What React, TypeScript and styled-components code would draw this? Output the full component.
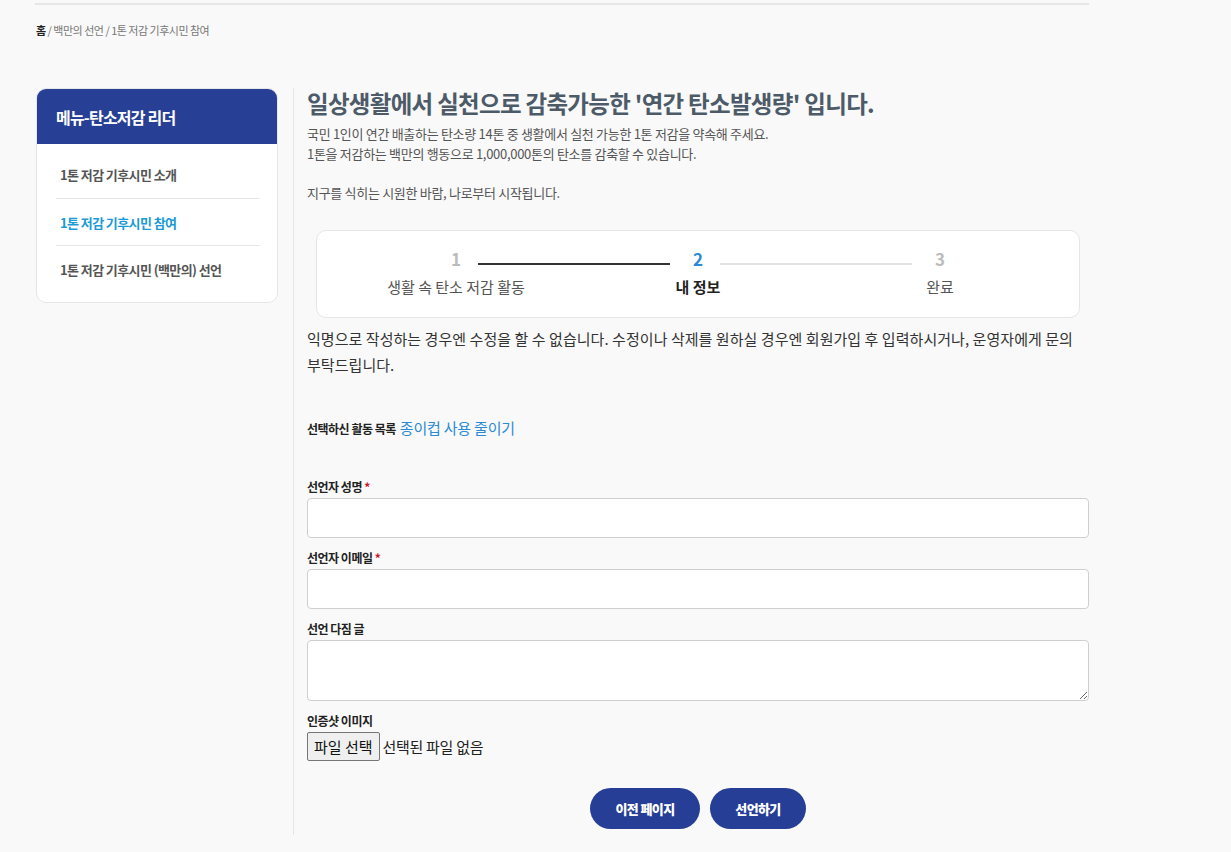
import React from "react"
import styled, { createGlobalStyle } from "styled-components"

const GlobalStyle = createGlobalStyle`
  body {
    margin: 0;
    background: #f9f9f9;
    font-family: "Noto Sans CJK KR", "Noto Sans", sans-serif;
    color: #333;
  }
  *, *::before, *::after {
    box-sizing: border-box;
  }
`

const Page = styled.div`
  width: 1054px;
  margin-left: 35px;
  padding-top: 3px;
`

const TopRule = styled.div`
  border-top: 2px solid #e6e6e6;
`

const Breadcrumb = styled.div`
  margin-top: 16px;
  font-size: 11px;
  line-height: 18px;
  color: #777;
  padding-left: 1px;
  letter-spacing: -0.5px;

  b {
    color: #222;
    font-weight: 700;
  }
`

const Layout = styled.div`
  display: flex;
  margin-top: 49px;
`

const Sidebar = styled.aside`
  width: 242px;
  margin-left: 1px;
  margin-right: 15px;
  align-self: flex-start;
  background: #fff;
  border: 1px solid #e6e6e6;
  border-radius: 10px;
  overflow: hidden;
`

const SideHeader = styled.div`
  height: 55px;
  background: #283f96;
  color: #fff;
  font-size: 16px;
  font-weight: 700;
  letter-spacing: -0.8px;
  display: flex;
  align-items: center;
  padding-left: 19px;
`

const SideList = styled.ul`
  list-style: none;
  margin: 0;
  padding: 7px 18px 10px 19px;
`

const SideItem = styled.li<{ active?: boolean }>`
  height: 47px;
  display: flex;
  align-items: center;
  padding-left: 4px;
  font-size: 13px;
  font-weight: 700;
  letter-spacing: -0.6px;
  color: ${({ active }) => (active ? "#1a9ad6" : "#555")};

  & + & {
    border-top: 1px solid #e4e4e4;
  }
`

const Content = styled.main`
  flex: 1;
  border-left: 1px solid #e6e6e6;
  padding: 0 0 6px 13px;
`

const Title = styled.h2`
  margin: 0;
  font-size: 23.5px;
  line-height: 30px;
  font-weight: 700;
  color: #4d5b69;
  letter-spacing: -0.7px;
`

const Desc = styled.p`
  margin: 6px 0 0;
  font-size: 13px;
  line-height: 19.5px;
  color: #555;
  letter-spacing: -0.3px;
`

const StepBox = styled.div`
  margin: 28px 9px 0;
  background: #fff;
  border: 1px solid #e6e6e6;
  border-radius: 10px;
  padding: 15px 0 20px;
`

const StepNums = styled.div`
  display: flex;
  justify-content: center;
  align-items: center;
  height: 24px;
`

const StepNum = styled.span<{ current?: boolean }>`
  width: 44px;
  text-align: center;
  font-size: 17px;
  font-weight: 700;
  color: ${({ current }) => (current ? "#2a8ad4" : "#bbb")};
`

const StepLine = styled.span<{ done?: boolean }>`
  width: 192px;
  height: 2px;
  margin-right: 6px;
  margin-top: 12px;
  background: ${({ done }) => (done ? "#333" : "#e2e2e2")};
`

const StepLabels = styled.div`
  display: grid;
  grid-template-columns: repeat(3, 242px);
  justify-content: center;
  margin-top: 7px;
`

const StepLabel = styled.span<{ current?: boolean }>`
  text-align: center;
  font-size: 15px;
  line-height: 20px;
  letter-spacing: 0;
  font-weight: ${({ current }) => (current ? 700 : 400)};
  color: ${({ current }) => (current ? "#222" : "#555")};
`

const Notice = styled.p`
  margin: 8px 0 0;
  font-size: 15px;
  line-height: 26px;
  color: #333;
  letter-spacing: 0.05px;
`

const Chosen = styled.div`
  margin-top: 38px;
  font-size: 12px;
  font-weight: 700;
  line-height: 24px;
  letter-spacing: -0.5px;
  color: #222;

  span {
    font-size: 15px;
    font-weight: 400;
    color: #2a8ad4;
    margin-left: 4px;
    letter-spacing: -0.2px;
  }
`

const Form = styled.form`
  margin-top: 38px;
  display: flex;
  flex-direction: column;
`

const Field = styled.div`
  & + & {
    margin-top: 12px;
  }
`

const Label = styled.label`
  display: block;
  font-size: 12px;
  font-weight: 700;
  line-height: 16px;
  color: #222;
  letter-spacing: -0.5px;
  margin-bottom: 3px;

  em {
    font-style: normal;
    color: #d0102a;
  }
`

const TextInput = styled.input`
  display: block;
  width: 100%;
  height: 40px;
  border: 1px solid #cfcfcf;
  border-radius: 4px;
  background: #fff;
`

const TextArea = styled.textarea`
  display: block;
  width: 100%;
  height: 61px;
  border: 1px solid #cfcfcf;
  border-radius: 4px;
  background: #fff;
`

const FileRow = styled.div`
  display: flex;
  align-items: center;
  font-size: 15px;
  color: #222;
  letter-spacing: -0.3px;
`

const FileButton = styled.button`
  height: 29px;
  padding: 0 6px;
  margin-right: 3px;
  font-family: inherit;
  font-size: 15px;
  color: #111;
  background: #efefef;
  border: 1px solid #767676;
  border-radius: 2px;
`

const Actions = styled.div`
  display: flex;
  justify-content: center;
  gap: 10px;
  margin-top: 27px;
`

const PillButton = styled.button<{ w: number }>`
  width: ${({ w }) => w}px;
  height: 41px;
  border: 0;
  border-radius: 21px;
  background: #263e95;
  color: #fff;
  font-family: inherit;
  font-size: 13px;
  font-weight: 800;
  letter-spacing: -0.6px;
`

export default function App() {
  return (
    <>
      <GlobalStyle />
      <Page>
        <TopRule />
        <Breadcrumb>
          <b>홈</b> / 백만의 선언 / 1톤 저감 기후시민 참여
        </Breadcrumb>
        <Layout>
          <Sidebar>
            <SideHeader>메뉴-탄소저감 리더</SideHeader>
            <SideList>
              <SideItem>1톤 저감 기후시민 소개</SideItem>
              <SideItem active>1톤 저감 기후시민 참여</SideItem>
              <SideItem>1톤 저감 기후시민 (백만의) 선언</SideItem>
            </SideList>
          </Sidebar>
          <Content>
            <Title>일상생활에서 실천으로 감축가능한 '연간 탄소발생량' 입니다.</Title>
            <Desc>
              국민 1인이 연간 배출하는 탄소량 14톤 중 생활에서 실천 가능한 1톤 저감을 약속해 주세요.
              <br />
              1톤을 저감하는 백만의 행동으로 1,000,000톤의 탄소를 감축할 수 있습니다.
              <br />
              <br />
              지구를 식히는 시원한 바람, 나로부터 시작됩니다.
            </Desc>
            <StepBox>
              <StepNums>
                <StepNum>1</StepNum>
                <StepLine done />
                <StepNum current>2</StepNum>
                <StepLine />
                <StepNum>3</StepNum>
              </StepNums>
              <StepLabels>
                <StepLabel>생활 속 탄소 저감 활동</StepLabel>
                <StepLabel current>내 정보</StepLabel>
                <StepLabel>완료</StepLabel>
              </StepLabels>
            </StepBox>
            <Notice>
              익명으로 작성하는 경우엔 수정을 할 수 없습니다. 수정이나 삭제를 원하실 경우엔 회원가입 후 입력하시거나, 운영자에게 문의
              부탁드립니다.
            </Notice>
            <Chosen>
              선택하신 활동 목록<span>종이컵 사용 줄이기</span>
            </Chosen>
            <Form onSubmit={e => e.preventDefault()}>
              <Field>
                <Label>
                  선언자 성명 <em>*</em>
                </Label>
                <TextInput type="text" />
              </Field>
              <Field>
                <Label>
                  선언자 이메일 <em>*</em>
                </Label>
                <TextInput type="email" />
              </Field>
              <Field>
                <Label>선언 다짐 글</Label>
                <TextArea />
              </Field>
              <Field>
                <Label>인증샷 이미지</Label>
                <FileRow>
                  <FileButton type="button">파일 선택</FileButton>
                  선택된 파일 없음
                </FileRow>
              </Field>
              <Actions>
                <PillButton type="button" w={110}>이전 페이지</PillButton>
                <PillButton type="submit" w={96}>선언하기</PillButton>
              </Actions>
            </Form>
          </Content>
        </Layout>
      </Page>
    </>
  )
}
